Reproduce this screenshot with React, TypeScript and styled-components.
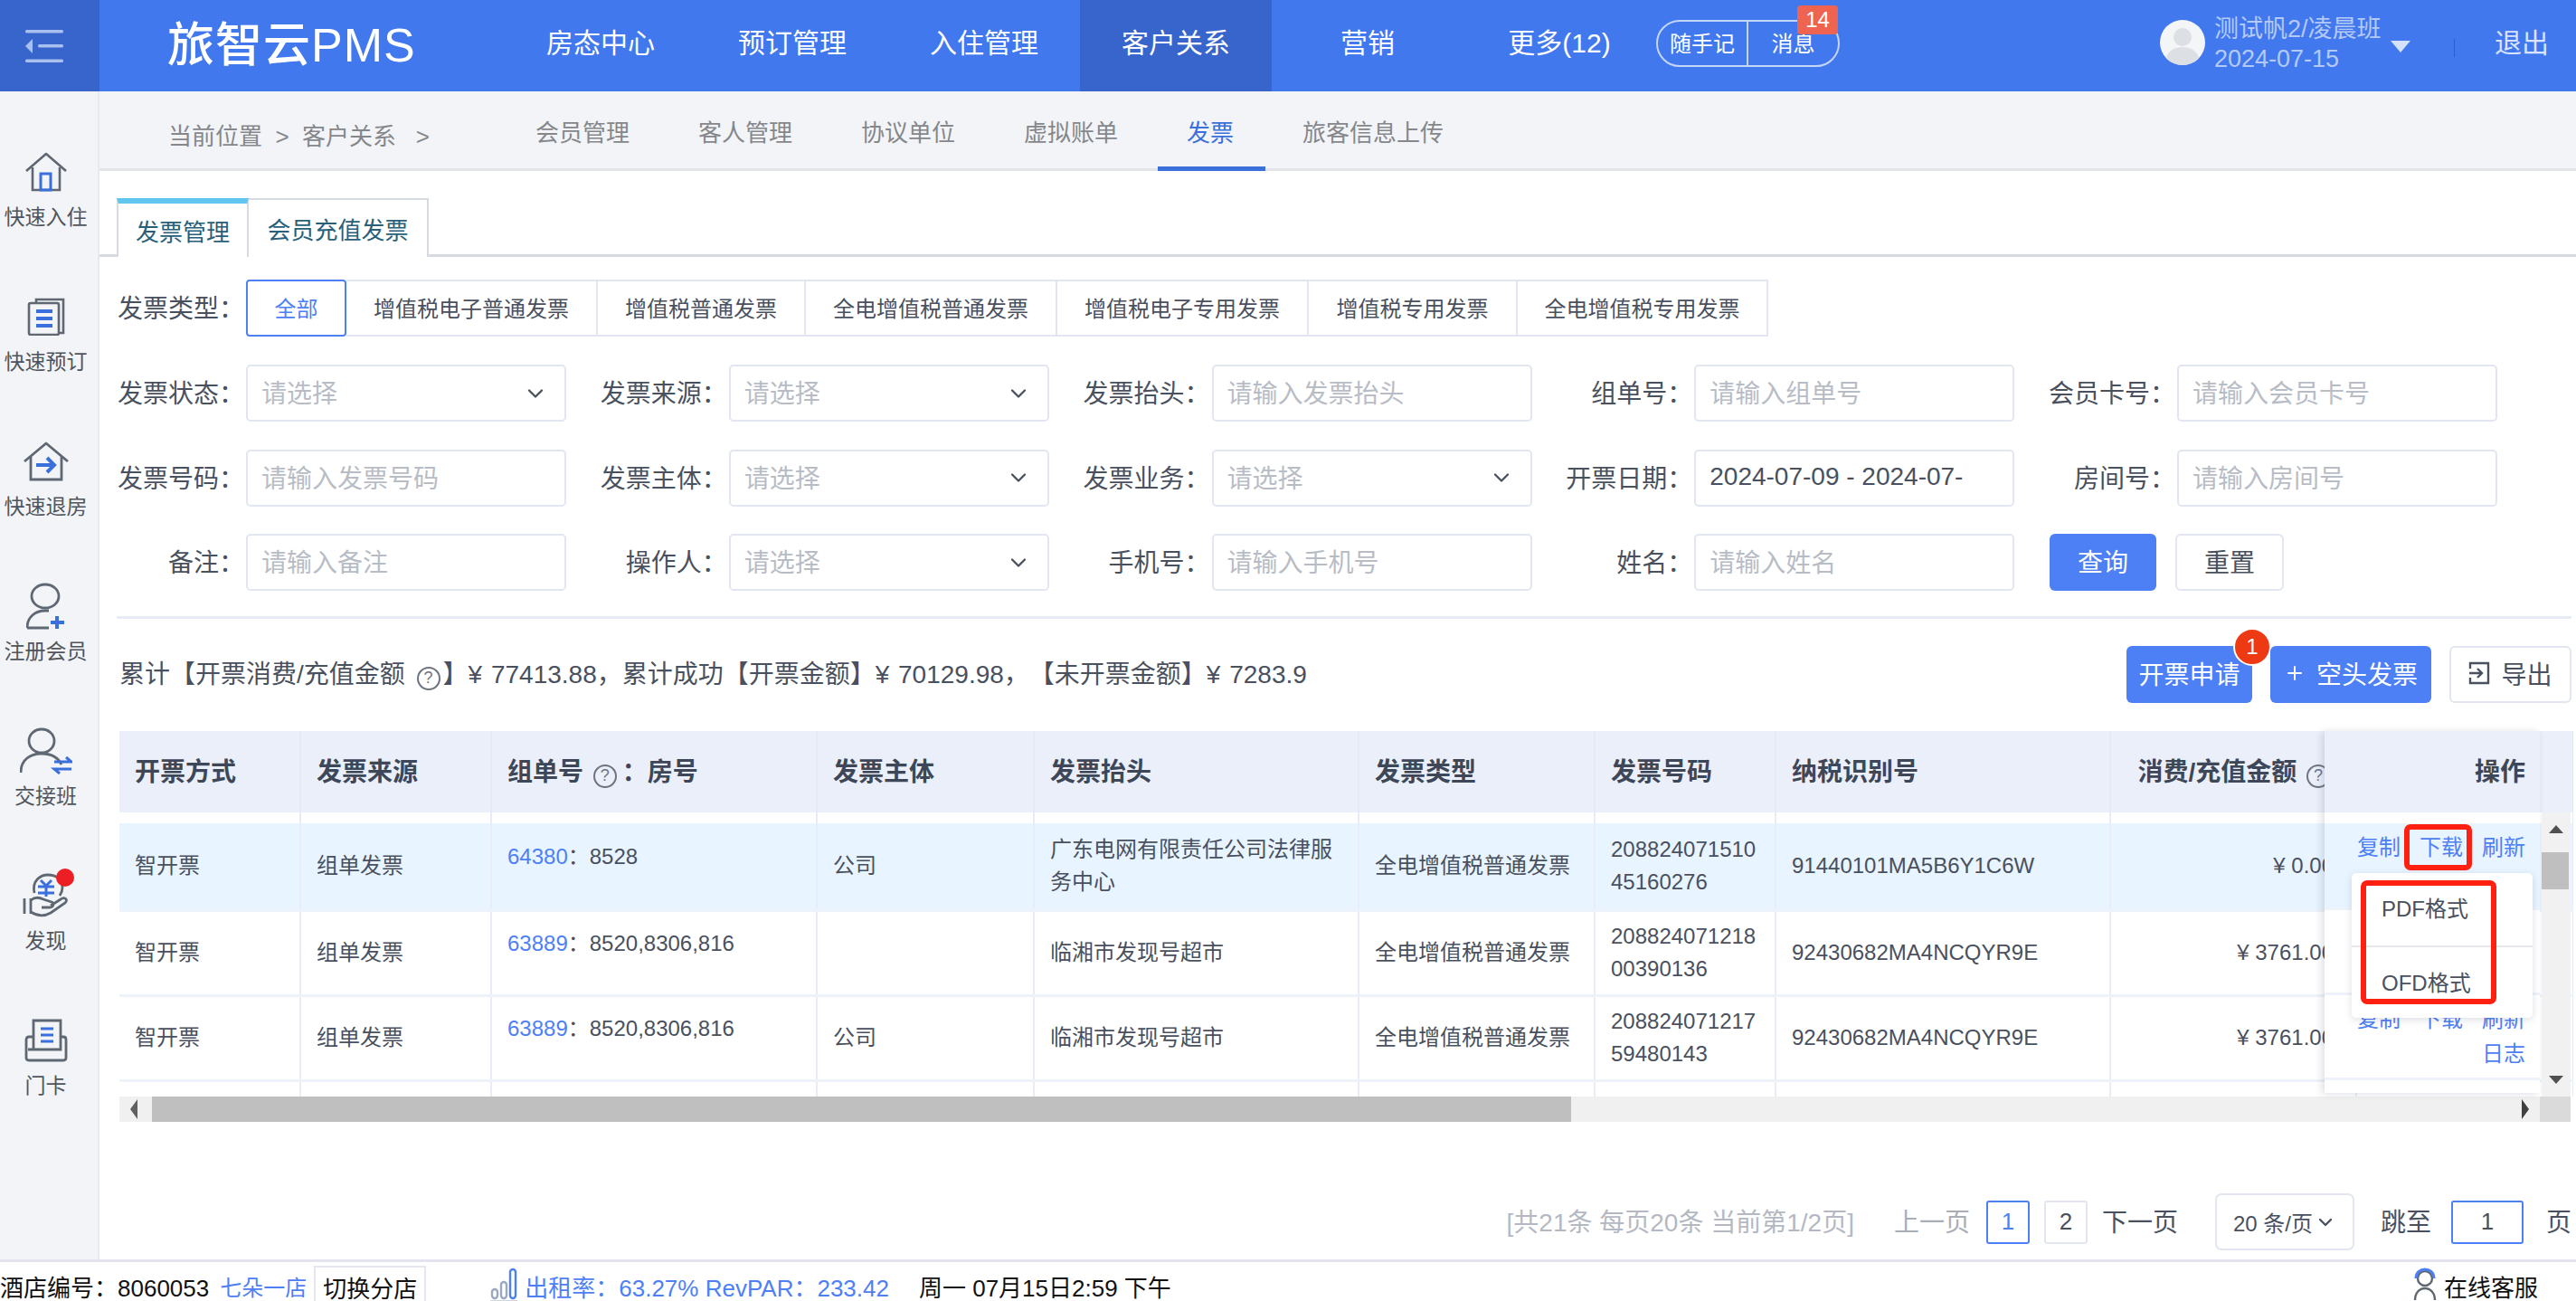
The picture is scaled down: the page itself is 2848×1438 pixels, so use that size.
import styled, { createGlobalStyle } from "styled-components";
import { ChevronDown, Plus } from "lucide-react";
import type { ReactNode } from "react";

const GlobalStyle = createGlobalStyle`
    html, body {
        margin: 0;
        padding: 0;
        height: 100%;
        overflow: hidden;
        background: #fff;
        font-family: "Liberation Sans", "Noto Sans CJK SC", sans-serif;
        color: #49505e;
    }
    * { box-sizing: border-box; }
`;

const Page = styled.div`
    width: 2848px;
    height: 1438px;
    display: flex;
    flex-direction: column;
    overflow: hidden;
`;

/* ---------- top bar ---------- */
const TopBar = styled.header`
    height: 101px;
    flex: none;
    display: flex;
    align-items: center;
    background: #4178ee;
    color: #fff;
`;

const FoldBox = styled.div`
    width: 110px;
    height: 100%;
    background: #3765cc;
    display: flex;
    align-items: center;
    padding-left: 28px;
`;

const Logo = styled.div`
    width: 448px;
    padding: 0 0 10px 75px;
    font-size: 52px;
    font-weight: 500;
    letter-spacing: 1px;
    white-space: nowrap;
`;

const NavItem = styled.div<{ $active?: boolean }>`
    width: 212px;
    height: 100%;
    padding-bottom: 12px;
    display: flex;
    align-items: center;
    justify-content: center;
    font-size: 30px;
    background: ${(p) => (p.$active ? "#3765cc" : "transparent")};
`;

const NotePill = styled.div`
    position: relative;
    margin-top: -6px;
    margin-left: 1px;
    width: 203px;
    height: 52px;
    display: flex;
    border: 2px solid #c5d5f8;
    border-radius: 26px;
    font-size: 24px;
`;

const NoteCell = styled.div<{ $first?: boolean }>`
    flex: ${(p) => (p.$first ? "0 0 100px" : "1")};
    padding-bottom: 3px;
    display: flex;
    align-items: center;
    justify-content: center;
    border-right: ${(p) => (p.$first ? "2px solid #c5d5f8" : "none")};
`;

const MsgBadge = styled.span`
    position: absolute;
    left: 154px;
    top: -18px;
    width: 45px;
    height: 32px;
    border-radius: 4px;
    background: #ee6450;
    font-size: 24px;
    line-height: 32px;
    text-align: center;
`;

const UserBox = styled.div`
    margin-left: auto;
    display: flex;
    align-items: center;
    height: 100%;
`;

const Avatar = styled.div`
    width: 50px;
    height: 50px;
    margin-top: -8px;
    margin-right: 10px;
    border-radius: 50%;
    overflow: hidden;
`;

const UserText = styled.div`
    width: 192px;
    margin-top: -4px;
    font-size: 27px;
    line-height: 33px;
    white-space: nowrap;
    color: #b5c9f7;
`;

const Caret = styled.span`
    width: 0;
    height: 0;
    margin-left: 3px;
    margin-top: 2px;
    border-left: 11px solid transparent;
    border-right: 11px solid transparent;
    border-top: 13px solid #d5e0fa;
`;

const UserSep = styled.span`
    width: 1px;
    height: 20px;
    margin: 4px 44px 0 48px;
    background: #2f5fc4;
`;

const Logout = styled.span`
    padding-bottom: 12px;
    font-size: 30px;
    color: #d9e4fc;
    margin-right: 30px;
`;

/* ---------- sidebar ---------- */
const Body = styled.div`
    flex: 1;
    min-height: 0;
    display: flex;
`;

const Side = styled.aside`
    width: 110px;
    flex: none;
    padding: 61px 7px 0 0;
    background: #f2f4f8;
    border-right: 2px solid #e6e9f1;
`;

const SideItem = styled.div`
    position: relative;
    height: 160px;
    display: flex;
    flex-direction: column;
    align-items: center;
`;

const SideIcon = styled.div`
    height: 56px;
    display: flex;
    align-items: center;
    justify-content: center;
`;

const SideLabel = styled.div`
    margin-top: 6px;
    font-size: 23px;
    line-height: 32px;
    white-space: nowrap;
    color: #50555c;
`;

const RedDot = styled.span`
    position: absolute;
    left: 62px;
    top: -2px;
    width: 20px;
    height: 20px;
    border-radius: 50%;
    background: #ee1f24;
`;

/* ---------- main ---------- */
const Main = styled.main`
    flex: 1;
    min-width: 0;
    display: flex;
    flex-direction: column;
`;

const SubBar = styled.div`
    height: 88px;
    flex: none;
    display: flex;
    padding-left: 76px;
    background: #f2f4f8;
    border-bottom: 3px solid #e2e4e8;
`;

const Crumb = styled.div`
    width: 406px;
    margin-top: 32px;
    font-size: 26px;
    line-height: 36px;
    color: #85878a;
    white-space: pre;
`;

const SubTab = styled.div<{ $active?: boolean }>`
    position: relative;
    height: 85px;
    margin-right: 76px;
    padding-top: 28px;
    font-size: 26px;
    line-height: 36px;
    color: ${(p) => (p.$active ? "#3b6fdb" : "#85878a")};

    &::after {
        content: "";
        display: ${(p) => (p.$active ? "block" : "none")};
        position: absolute;
        left: -32px;
        right: -35px;
        bottom: -3px;
        height: 5px;
        background: #3b6fdb;
    }
`;

const Content = styled.div`
    flex: 1;
    min-height: 0;
    padding: 30px 0 0 19px;
    display: flex;
    flex-direction: column;
`;

const TabRow = styled.div`
    height: 65px;
    flex: none;
    display: flex;
    margin-left: -19px;
    padding-left: 19px;
    border-bottom: 3px solid #d5dbe0;
`;

const Tab = styled.div<{ $active?: boolean }>`
    height: 65px;
    padding: ${(p) => (p.$active ? "14px" : "16px")} 0 0;
    width: ${(p) => (p.$active ? "146px" : "199px")};
    text-align: center;
    font-size: 26px;
    line-height: 36px;
    color: #28607a;
    background: #fff;
    border: 2px solid #d5dbe0;
    border-left-width: ${(p) => (p.$active ? "2px" : "0")};
    border-top: ${(p) => (p.$active ? "6px solid #60c6f0" : "2px solid #d5dbe0")};
    border-bottom: ${(p) => (p.$active ? "none" : "0")};
    position: relative;
    z-index: 1;
`;

const TypeRow = styled.div`
    display: flex;
    align-items: center;
    margin-top: 25px;
    height: 63px;
`;

const FieldLabel = styled.div`
    width: 143px;
    flex: none;
    padding: 0 2px 3px 0;
    text-align: right;
    font-size: 28px;
    white-space: nowrap;
    color: #49505e;
`;

const TypeBtn = styled.div<{ $w: number; $active?: boolean }>`
    width: ${(p) => p.$w}px;
    height: 63px;
    padding-bottom: 3px;
    display: flex;
    align-items: center;
    justify-content: center;
    font-size: 24px;
    color: ${(p) => (p.$active ? "#4e80f5" : "#49505e")};
    border: 2px solid ${(p) => (p.$active ? "#4e80f5" : "#e2e6f0")};
    border-left-width: ${(p) => (p.$active ? "2px" : "0")};
    border-radius: ${(p) => (p.$active ? "4px" : "0")};
`;

const FormGrid = styled.div`
    margin-top: 31px;
    display: grid;
    grid-template-columns: repeat(5, 533.75px);
    row-gap: 30.5px;
`;

const Field = styled.div`
    display: flex;
    align-items: center;
    height: 63px;
`;

const InputBox = styled.div<{ $filled?: boolean }>`
    width: 354px;
    height: 63px;
    padding: 0 15px 3px;
    display: flex;
    align-items: center;
    justify-content: space-between;
    border: 2px solid #e2e6f0;
    border-radius: 5px;
    font-size: 28px;
    white-space: nowrap;
    overflow: hidden;
    color: ${(p) => (p.$filled ? "#49505e" : "#b8bcc5")};

    svg {
        color: #49505e;
        flex: none;
        margin: 3px 3px 0 0;
    }
`;

const FormActions = styled.div`
    display: flex;
    align-items: center;
    gap: 21px;
    padding-left: 2px;
`;

const PrimaryBtn = styled.div<{ $w: number }>`
    position: relative;
    width: ${(p) => p.$w}px;
    height: 63px;
    padding-bottom: 4px;
    display: flex;
    align-items: center;
    justify-content: center;
    gap: 12px;
    border-radius: 6px;
    background: #4e80f5;
    color: #fff;
    font-size: 28px;
`;

const GhostBtn = styled.div<{ $w: number }>`
    width: ${(p) => p.$w}px;
    height: 63px;
    padding-bottom: 4px;
    display: flex;
    align-items: center;
    justify-content: center;
    gap: 12px;
    border: 2px solid #e2e6f0;
    border-radius: 6px;
    color: #49505e;
    font-size: 28px;
`;

const Divider = styled.div`
    height: 3px;
    width: 2714px;
    margin-top: 28px;
    background: #e8ecf6;
`;

const SummaryRow = styled.div`
    width: 2714px;
    height: 63px;
    margin-top: 30px;
    display: flex;
    align-items: center;
    gap: 20px;
    padding-left: 3px;
`;

const SummaryText = styled.div`
    margin-right: auto;
    padding-bottom: 5px;
    font-size: 28px;
    color: #49505e;
    white-space: pre;
    word-spacing: 2px;
    text-spacing-trim: space-all;
`;

const Help = styled.span`
    display: inline-flex;
    width: 26px;
    height: 26px;
    margin: 0 3px;
    align-items: center;
    justify-content: center;
    border: 2px solid #6d7480;
    border-radius: 50%;
    font-size: 18px;
    font-weight: 400;
    color: #6d7480;
    vertical-align: 0;
`;

const HeadColon = styled.span`
    margin-left: 3px;
`;

const CountBadge = styled.span`
    position: absolute;
    right: -21px;
    top: -20px;
    width: 42px;
    height: 42px;
    border-radius: 50%;
    background: #ee3a12;
    border: 2px solid #fff;
    display: flex;
    align-items: center;
    justify-content: center;
    font-size: 24px;
    color: #fff;
`;

/* ---------- table ---------- */
const TableFrame = styled.div`
    position: relative;
    width: 2713px;
    height: 432px;
    margin: 31px 0 0 3px;
    flex: none;
`;

const TableClip = styled.div`
    height: 404px;
    overflow: hidden;
`;

const Table = styled.table`
    width: 2713px;
    table-layout: fixed;
    border-collapse: collapse;
`;

const Th = styled.th<{ $right?: boolean }>`
    height: 90px;
    padding: 0 ${(p) => (p.$right ? "25px" : "17px")} 4px 17px;
    background: #eaeffa;
    border-right: 2px solid #e4e9f5;
    font-size: 28px;
    font-weight: 700;
    color: #3d4758;
    white-space: nowrap;
    text-align: ${(p) => (p.$right ? "right" : "left")};
`;

const Spacer = styled.td`
    height: 12px;
    padding: 0;
    border-right: 2px solid #e8ecf6;
`;

const Tr = styled.tr<{ $hl?: boolean; $h: number }>`
    height: ${(p) => p.$h}px;
    background: ${(p) => (p.$hl ? "#e8f4ff" : "#fff")};
`;

const Td = styled.td<{ $right?: boolean }>`
    padding: 0 ${(p) => (p.$right ? "24px" : "17px")} 0 17px;
    border-right: 2px solid #e8ecf6;
    border-bottom: 3px solid #eef2fa;
    font-size: 24px;
    line-height: 36px;
    color: #49505e;
    text-align: ${(p) => (p.$right ? "right" : "left")};
    white-space: ${(p) => (p.$right ? "pre" : "normal")};
    word-break: break-all;
`;

const RoomCell = styled.div`
    margin-top: -20px;
    white-space: nowrap;
`;

const BlueLink = styled.span`
    color: #4e80f5;
`;

const FixedCol = styled.div`
    position: absolute;
    left: 2438px;
    top: 0;
    width: 238px;
    height: 400px;
    background: #fff;
    box-shadow: -3px 1px 8px rgba(70, 80, 110, 0.18);
`;

const FixedHead = styled.div`
    height: 90px;
    margin-bottom: 12px;
    padding: 0 16px 4px 0;
    background: #eaeffa;
    display: flex;
    align-items: center;
    justify-content: flex-end;
    font-size: 28px;
    font-weight: 700;
    color: #3d4758;
`;

const FixedRow = styled.div<{ $hl?: boolean; $h: number }>`
    height: ${(p) => p.$h}px;
    padding: 8px 16px 0 0;
    background: ${(p) => (p.$hl ? "#e8f4ff" : "#fff")};
    border-bottom: 3px solid #eef2fa;
    display: flex;
    flex-wrap: wrap;
    align-content: flex-start;
    justify-content: flex-end;
    column-gap: 21px;
    font-size: 24px;
    line-height: 38px;
    color: #4e80f5;
`;

const HBar = styled.div`
    height: 28px;
    width: 2676px;
    background: #f0f0f0;
    display: flex;
    align-items: center;
    justify-content: space-between;
    padding: 0 12px;
`;

const HThumb = styled.div`
    position: absolute;
    left: 36px;
    bottom: 0;
    width: 1569px;
    height: 28px;
    background: #bfbfbf;
`;

const ArrowH = styled.span<{ $left?: boolean }>`
    width: 0;
    height: 0;
    border-top: 11px solid transparent;
    border-bottom: 11px solid transparent;
    ${(p) => (p.$left ? "border-right: 8px solid #606060;" : "border-left: 8px solid #404040;")}
`;

const VBar = styled.div`
    position: absolute;
    left: 2678px;
    top: 90px;
    width: 32px;
    height: 314px;
    padding: 14px 0;
    background: #f1f1f1;
    display: flex;
    flex-direction: column;
    justify-content: space-between;
    align-items: center;
`;

const VThumb = styled.div`
    position: absolute;
    left: 0;
    top: 44px;
    width: 30px;
    height: 41px;
    background: #bfbfbf;
`;

const ArrowV = styled.span<{ $up?: boolean }>`
    width: 0;
    height: 0;
    border-left: 8px solid transparent;
    border-right: 8px solid transparent;
    ${(p) => (p.$up ? "border-bottom: 9px solid #505050;" : "border-top: 9px solid #505050;")}
`;

const Corner = styled.div`
    position: absolute;
    left: 2676px;
    bottom: 0;
    width: 34px;
    height: 28px;
    background: #dadada;
`;

const DownMenu = styled.div`
    position: absolute;
    left: 2468px;
    top: 157px;
    width: 200px;
    height: 160px;
    background: #fff;
    border-radius: 5px;
    box-shadow: 0 2px 8px rgba(70, 80, 110, 0.18);
    font-size: 24px;
    color: #49505e;
`;

const MenuItem = styled.div<{ $last?: boolean }>`
    height: ${(p) => (p.$last ? "78px" : "82px")};
    padding: 22px 0 0 33px;
    line-height: 36px;
    border-bottom: ${(p) => (p.$last ? "none" : "2px solid #e8e8ec")};
`;

const RedBox = styled.div<{ $l: number; $t: number; $w: number; $h: number }>`
    position: absolute;
    left: ${(p) => p.$l}px;
    top: ${(p) => p.$t}px;
    width: ${(p) => p.$w}px;
    height: ${(p) => p.$h}px;
    border: 6px solid #ff2012;
    border-radius: 7px;
`;

/* ---------- pagination / footer ---------- */
const Pager = styled.div`
    width: 2714px;
    margin-top: 79px;
    display: flex;
    align-items: center;
    justify-content: flex-end;
    height: 63px;
    font-size: 28px;
    white-space: nowrap;
    color: #49505e;

    > span:not([data-box]) {
        padding-bottom: 3px;
    }
`;

const PagerTotal = styled.span`
    color: #b4b8c2;
    margin-right: 44px;
`;

const PagerMuted = styled.span`
    color: #a9adb6;
    margin-right: 18px;
`;

const PageBox = styled.span<{ $active?: boolean; $w?: number }>`
    width: ${(p) => p.$w ?? 48}px;
    height: 48px;
    display: flex;
    align-items: center;
    justify-content: center;
    margin-right: 16px;
    font-size: 26px;
    border: 2px solid ${(p) => (p.$active ? "#4e80f5" : "#e2e6f0")};
    border-radius: 3px;
    color: ${(p) => (p.$active ? "#4e80f5" : "#49505e")};
`;

const PageSelect = styled.span`
    width: 154px;
    height: 63px;
    margin: 0 29px 0 41px;
    display: flex;
    align-items: center;
    justify-content: center;
    gap: 2px;
    font-size: 24px;
    border: 2px solid #e2e6f0;
    border-radius: 7px;
`;

const JumpInput = styled(PageBox)`
    margin: 0 25px 0 22px;
    color: #49505e;
`;

const Footer = styled.footer`
    height: 46px;
    flex: none;
    border-top: 3px solid #e4e4f0;
    display: flex;
    padding-top: 4px;
    font-size: 26px;
    color: #111;
    white-space: nowrap;
    overflow: hidden;
`;

const FootText = styled.span<{ $gap?: number; $blue?: boolean }>`
    margin-left: ${(p) => p.$gap ?? 0}px;
    line-height: 50px;
    color: ${(p) => (p.$blue ? "#4e80f5" : "#111")};
`;

const ShopName = styled(FootText)`
    font-size: 24px;
`;

const SwitchShop = styled.span`
    margin-left: 8px;
    padding: 0 8px;
    height: 50px;
    line-height: 48px;
    border: 2px solid #e6e6f2;
    border-bottom: none;
`;

const FootIcon = styled.span<{ $gap?: number }>`
    margin: 2px 8px 0 ${(p) => p.$gap ?? 0}px;
    display: flex;
`;

const FootRight = styled.div`
    margin-left: auto;
    padding-right: 42px;
    display: flex;
`;

const gray = "#5f6872";
const blue = "#3b6fdb";

const icons: Record<string, ReactNode> = {
    house: (
        <svg width="46" height="44" viewBox="0 0 46 44" fill="none" stroke={gray} strokeWidth="2.6">
            <path d="M1 21 23 2l22 19" strokeLinejoin="round" />
            <path d="M8 17v25h30V17" />
            <rect x="17" y="24" width="11" height="18" stroke={blue} strokeWidth="3" />
        </svg>
    ),
    book: (
        <svg width="42" height="42" viewBox="0 0 42 42" fill="none" stroke={gray} strokeWidth="2.6">
            <path d="M10 5V2h30v37h-4" />
            <rect x="2" y="6" width="33" height="35" rx="2" />
            <path d="M10 15h18M10 23h18M10 31h18" stroke={blue} strokeWidth="4" />
        </svg>
    ),
    out: (
        <svg width="50" height="44" viewBox="0 0 50 44" fill="none" stroke={gray} strokeWidth="2.8">
            <path d="M1 22 25 2l24 20" strokeLinejoin="round" />
            <path d="M8 17v25h34V17" />
            <path d="M14 26h20M26 18l8 8-8 8" stroke={blue} strokeWidth="4" />
        </svg>
    ),
    addUser: (
        <svg width="44" height="52" viewBox="0 0 44 52" fill="none" stroke={gray} strokeWidth="2.8">
            <ellipse cx="21" cy="15" rx="15" ry="13" />
            <path d="M1 50c0-12 9-19 20-19h4M1 50h24" />
            <path d="M27 44h15M34 37v14" stroke={blue} strokeWidth="4" />
        </svg>
    ),
    swap: (
        <svg width="58" height="52" viewBox="0 0 58 52" fill="none" stroke={gray} strokeWidth="2.8">
            <ellipse cx="24" cy="15" rx="14" ry="13" />
            <path d="M1 50c0-14 10-21 23-21 10 0 18 4 22 12" />
            <path d="M38 38h19l-6-5M57 46H38l6 5" stroke={blue} strokeWidth="3" />
        </svg>
    ),
    coin: (
        <svg width="52" height="50" viewBox="0 0 52 50" fill="none" stroke={gray} strokeWidth="2.8">
            <path d="M13 22C10 8 20 2 28 2c9 0 16 5 16 14 0 4-1 6-3 9" />
            <path d="M20 8l6 6 6-6M17 15h18M17 22h18M26 14v12" stroke={blue} strokeWidth="3" />
            <path d="M2 28v17M9 28v17" />
            <path d="M9 30c5-4 10-3 14-1l9 3c3 1 3 6-3 6H21M9 43c8 5 15 5 22 1l16-11c4-4-1-7-5-4l-11 7" />
        </svg>
    ),
    print: (
        <svg width="48" height="48" viewBox="0 0 48 48" fill="none" stroke={gray} strokeWidth="2.8">
            <path d="M10 34V2h30v32H4" />
            <path d="M9 20H5c-2 0-3 1-3 3v20c0 2 1 3 3 3h38c2 0 3-1 3-3V23c0-2-1-3-3-3h-3" />
            <path d="M18 11h14M18 18h14M18 25h14" stroke={blue} strokeWidth="3" />
        </svg>
    ),
};

const sideItems = [
    { label: "快速入住", icon: "house" },
    { label: "快速预订", icon: "book" },
    { label: "快速退房", icon: "out" },
    { label: "注册会员", icon: "addUser" },
    { label: "交接班", icon: "swap" },
    { label: "发现", icon: "coin", dot: true },
    { label: "门卡", icon: "print" },
];

const navItems = ["房态中心", "预订管理", "入住管理", "客户关系", "营销", "更多(12)"];
const subTabs = ["会员管理", "客人管理", "协议单位", "虚拟账单", "发票", "旅客信息上传"];

const typeBtns = [
    { text: "全部", w: 111 },
    { text: "增值税电子普通发票", w: 278 },
    { text: "增值税普通发票", w: 230 },
    { text: "全电增值税普通发票", w: 278 },
    { text: "增值税电子专用发票", w: 278 },
    { text: "增值税专用发票", w: 231 },
    { text: "全电增值税专用发票", w: 277 },
];

const fields = [
    { label: "发票状态：", ph: "请选择", select: true },
    { label: "发票来源：", ph: "请选择", select: true },
    { label: "发票抬头：", ph: "请输入发票抬头" },
    { label: "组单号：", ph: "请输入组单号" },
    { label: "会员卡号：", ph: "请输入会员卡号" },
    { label: "发票号码：", ph: "请输入发票号码" },
    { label: "发票主体：", ph: "请选择", select: true },
    { label: "发票业务：", ph: "请选择", select: true },
    { label: "开票日期：", value: "2024-07-09 - 2024-07-" },
    { label: "房间号：", ph: "请输入房间号" },
    { label: "备注：", ph: "请输入备注" },
    { label: "操作人：", ph: "请选择", select: true },
    { label: "手机号：", ph: "请输入手机号" },
    { label: "姓名：", ph: "请输入姓名" },
];

const colWidths = [200, 211, 360, 240, 359, 261, 200, 370, 272, 240];

const rows = [
    {
        h: 96,
        hl: true,
        no: "64380",
        room: "8528",
        body: "公司",
        title: "广东电网有限责任公司法律服务中心",
        code: "20882407151045160276",
        tax: "91440101MA5B6Y1C6W",
        amount: "¥ 0.00",
    },
    {
        h: 94,
        no: "63889",
        room: "8520,8306,816",
        body: "",
        title: "临湘市发现号超市",
        code: "20882407121800390136",
        tax: "92430682MA4NCQYR9E",
        amount: "¥ 3761.00",
    },
    {
        h: 94,
        no: "63889",
        room: "8520,8306,816",
        body: "公司",
        title: "临湘市发现号超市",
        code: "20882407121759480143",
        tax: "92430682MA4NCQYR9E",
        amount: "¥ 3761.00",
    },
];

export default function App() {
    return (
        <Page>
            <GlobalStyle />
            <TopBar>
                <FoldBox>
                    <svg width="42" height="36" viewBox="0 0 42 36" fill="#a9bfee">
                        <rect width="42" height="3.5" rx="1.5" />
                        <rect x="14" y="16" width="28" height="3.5" rx="1.5" />
                        <rect y="32.5" width="42" height="3.5" rx="1.5" />
                        <path d="M8 10v16L0 18z" />
                    </svg>
                </FoldBox>
                <Logo>旅智云PMS</Logo>
                {navItems.map((n) => (
                    <NavItem key={n} $active={n === "客户关系"}>
                        {n}
                    </NavItem>
                ))}
                <NotePill>
                    <NoteCell $first>随手记</NoteCell>
                    <NoteCell>消息</NoteCell>
                    <MsgBadge>14</MsgBadge>
                </NotePill>
                <UserBox>
                    <Avatar>
                        <svg width="50" height="50" viewBox="0 0 50 50">
                            <rect width="50" height="50" fill="#f4f5f7" />
                            <circle cx="25" cy="19" r="10" fill="#dcdfe4" />
                            <ellipse cx="25" cy="44" rx="18" ry="14" fill="#dcdfe4" />
                        </svg>
                    </Avatar>
                    <UserText>
                        测试帆2/凌晨班
                        <br />
                        2024-07-15
                    </UserText>
                    <Caret />
                    <UserSep />
                    <Logout>退出</Logout>
                </UserBox>
            </TopBar>
            <Body>
                <Side>
                    {sideItems.map((s) => (
                        <SideItem key={s.label}>
                            {s.dot && <RedDot />}
                            <SideIcon>{icons[s.icon]}</SideIcon>
                            <SideLabel>{s.label}</SideLabel>
                        </SideItem>
                    ))}
                </Side>
                <Main>
                    <SubBar>
                        <Crumb>{"当前位置  >  客户关系   >"}</Crumb>
                        {subTabs.map((t) => (
                            <SubTab key={t} $active={t === "发票"}>
                                {t}
                            </SubTab>
                        ))}
                    </SubBar>
                    <Content>
                        <TabRow>
                            <Tab $active>发票管理</Tab>
                            <Tab>会员充值发票</Tab>
                        </TabRow>
                        <TypeRow>
                            <FieldLabel>发票类型：</FieldLabel>
                            {typeBtns.map((b, i) => (
                                <TypeBtn key={b.text} $w={b.w} $active={i === 0}>
                                    {b.text}
                                </TypeBtn>
                            ))}
                        </TypeRow>
                        <FormGrid>
                            {fields.map((f) => (
                                <Field key={f.label}>
                                    <FieldLabel>{f.label}</FieldLabel>
                                    <InputBox $filled={!!f.value}>
                                        {f.value ?? f.ph}
                                        {f.select && <ChevronDown size={28} strokeWidth={2} />}
                                    </InputBox>
                                </Field>
                            ))}
                            <FormActions>
                                <PrimaryBtn $w={118}>查询</PrimaryBtn>
                                <GhostBtn $w={120}>重置</GhostBtn>
                            </FormActions>
                        </FormGrid>
                        <Divider />
                        <SummaryRow>
                            <SummaryText>
                                累计【开票消费/充值金额 <Help>?</Help>】¥ 77413.88，累计成功【开票金额】¥ 70129.98，【未开票金额】¥ 7283.9
                            </SummaryText>
                            <PrimaryBtn $w={139}>
                                开票申请
                                <CountBadge>1</CountBadge>
                            </PrimaryBtn>
                            <PrimaryBtn $w={178}>
                                <Plus size={24} strokeWidth={2} />
                                空头发票
                            </PrimaryBtn>
                            <GhostBtn $w={135}>
                                <svg width="24" height="26" viewBox="0 0 24 26" fill="none" stroke="#49505e" strokeWidth="2.4">
                                    <path d="M2 8V2h20v22H2v-6" />
                                    <path d="M1 13h13M10 8l5 5-5 5" />
                                </svg>
                                导出
                            </GhostBtn>
                        </SummaryRow>
                        <TableFrame>
                            <TableClip>
                                <Table>
                                    <colgroup>
                                        {colWidths.map((w, i) => (
                                            <col key={i} width={w} />
                                        ))}
                                    </colgroup>
                                    <thead>
                                        <tr>
                                            <Th>开票方式</Th>
                                            <Th>发票来源</Th>
                                            <Th>
                                                组单号 <Help>?</Help>
                                                <HeadColon>：</HeadColon>房号
                                            </Th>
                                            <Th>发票主体</Th>
                                            <Th>发票抬头</Th>
                                            <Th>发票类型</Th>
                                            <Th>发票号码</Th>
                                            <Th>纳税识别号</Th>
                                            <Th $right>
                                                消费/充值金额 <Help>?</Help>
                                            </Th>
                                            <Th />
                                        </tr>
                                    </thead>
                                    <tbody>
                                        <tr>
                                            {colWidths.map((w, i) => (
                                                <Spacer key={i} />
                                            ))}
                                        </tr>
                                        {rows.map((r, i) => (
                                            <Tr key={i} $h={r.h} $hl={r.hl}>
                                                <Td>智开票</Td>
                                                <Td>组单发票</Td>
                                                <Td>
                                                    <RoomCell>
                                                        <BlueLink>{r.no}</BlueLink>：{r.room}
                                                    </RoomCell>
                                                </Td>
                                                <Td>{r.body}</Td>
                                                <Td>{r.title}</Td>
                                                <Td>全电增值税普通发票</Td>
                                                <Td>{r.code}</Td>
                                                <Td>{r.tax}</Td>
                                                <Td $right>{r.amount}</Td>
                                                <Td />
                                            </Tr>
                                        ))}
                                        <tr>
                                            {colWidths.map((w, i) => (
                                                <Spacer key={i} style={{ height: w }} />
                                            ))}
                                        </tr>
                                    </tbody>
                                </Table>
                            </TableClip>
                            <HBar>
                                <ArrowH $left />
                                <HThumb />
                                <ArrowH />
                            </HBar>
                            <FixedCol>
                                <FixedHead>操作</FixedHead>
                                <FixedRow $hl $h={96}>
                                    <span>复制</span>
                                    <span>下载</span>
                                    <span>刷新</span>
                                </FixedRow>
                                <FixedRow $h={94}>
                                    <span>复制</span>
                                    <span>下载</span>
                                    <span>刷新</span>
                                </FixedRow>
                                <FixedRow $h={94}>
                                    <span>复制</span>
                                    <span>下载</span>
                                    <span>刷新</span>
                                    <span>日志</span>
                                </FixedRow>
                            </FixedCol>
                            <VBar>
                                <ArrowV $up />
                                <VThumb />
                                <ArrowV />
                            </VBar>
                            <Corner />
                            <DownMenu>
                                <MenuItem>PDF格式</MenuItem>
                                <MenuItem $last>OFD格式</MenuItem>
                            </DownMenu>
                            <RedBox $l={2526} $t={103} $w={75} $h={51} />
                            <RedBox $l={2478} $t={165} $w={150} $h={137} />
                        </TableFrame>
                        <Pager>
                            <PagerTotal>[共21条 每页20条 当前第1/2页]</PagerTotal>
                            <PagerMuted>上一页</PagerMuted>
                            <PageBox $active data-box>
                                1
                            </PageBox>
                            <PageBox data-box>2</PageBox>
                            <span>下一页</span>
                            <PageSelect data-box>
                                20 条/页
                                <ChevronDown size={24} strokeWidth={2.4} />
                            </PageSelect>
                            <span>跳至</span>
                            <JumpInput $active $w={80} data-box>
                                1
                            </JumpInput>
                            <span>页</span>
                        </Pager>
                    </Content>
                </Main>
            </Body>
            <Footer>
                <FootText>酒店编号：8060053</FootText>
                <ShopName $gap={12} $blue>
                    七朵一店
                </ShopName>
                <SwitchShop>切换分店</SwitchShop>
                <FootIcon $gap={71}>
                    <svg width="30" height="40" viewBox="0 0 30 40" fill="none" stroke="#9aa8c0" strokeWidth="2.4">
                        <rect x="2" y="24" width="6" height="10" rx="3" />
                        <rect x="12" y="16" width="6" height="18" rx="3" />
                        <rect x="22" y="2" width="6" height="32" rx="3" stroke="#4e80f5" />
                        <path d="M0 38h30" strokeWidth="3" />
                    </svg>
                </FootIcon>
                <FootText $blue>出租率：63.27% RevPAR：233.42</FootText>
                <FootText $gap={33}>周一 07月15日2:59 下午</FootText>
                <FootRight>
                    <FootIcon>
                        <svg width="26" height="40" viewBox="0 0 26 40" fill="none" stroke="#5f6872" strokeWidth="2.4">
                            <circle cx="13" cy="12" r="8" />
                            <path d="M3 12C3 5 8 2 13 2s10 3 10 10" stroke="#4e80f5" strokeWidth="3" />
                            <path d="M2 36c0-8 5-13 11-13s11 5 11 13" />
                        </svg>
                    </FootIcon>
                    <FootText>在线客服</FootText>
                </FootRight>
            </Footer>
        </Page>
    );
}
